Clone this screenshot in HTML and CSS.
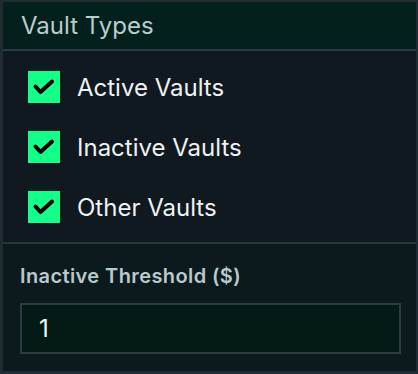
FILE: index.html
```html
<!DOCTYPE html>
<html lang="en">
<head>
    <meta charset="UTF-8">
    <meta name="viewport" content="width=device-width, initial-scale=1.0">
    <title>Vault Filters</title>
    <link rel="stylesheet" href="styles.css">
</head>
<body>
    <div class="panel">
        <div class="panel-header">Vault Types</div>

        <!-- Lista de tipos -->
        <div class="type-list">
            <label class="type-row">
                <span class="check">
                    <svg viewBox="0 0 32 32" width="32" height="32"><path d="M7.5 15.5 L12.5 21 L24 10.5" fill="none" stroke="#000" stroke-width="4" stroke-linecap="round" stroke-linejoin="round"/></svg>
                </span>
                <span class="type-name">Active Vaults</span>
            </label>
            <label class="type-row">
                <span class="check">
                    <svg viewBox="0 0 32 32" width="32" height="32"><path d="M7.5 15.5 L12.5 21 L24 10.5" fill="none" stroke="#000" stroke-width="4" stroke-linecap="round" stroke-linejoin="round"/></svg>
                </span>
                <span class="type-name">Inactive Vaults</span>
            </label>
            <label class="type-row">
                <span class="check">
                    <svg viewBox="0 0 32 32" width="32" height="32"><path d="M7.5 15.5 L12.5 21 L24 10.5" fill="none" stroke="#000" stroke-width="4" stroke-linecap="round" stroke-linejoin="round"/></svg>
                </span>
                <span class="type-name">Other Vaults</span>
            </label>
        </div>

        <div class="threshold">
            <div class="threshold-label">Inactive Threshold ($)</div>
            <div class="threshold-input">1</div>
        </div>
    </div>
</body>
</html>
```

FILE: styles.css
```css
body {
    margin: 0;
    padding: 0;
    background-color: #1f2d33;
    font-family: Inter, "Noto Sans", sans-serif;
}
.panel {
    width: 413px;
    height: 369px;
    margin: 2px 2px 0 3px;
    display: flex;
    flex-direction: column;
    background-color: #0c1a1e;
}
.panel-header {
    height: 47px;
    padding-left: 18px;
    display: flex;
    align-items: center;
    background-color: #03201c;
    color: #b9cdd0;
    font-size: 24px;
    border-bottom: 2px solid #2a3a40;
}
.type-list {
    padding: 20px 0 19px 25px;
    display: flex;
    flex-direction: column;
    gap: 28px;
    background-color: #111920;
    border-bottom: 2px solid #27363c;
}
.type-row {
    display: flex;
    align-items: center;
    height: 32px;
    gap: 17px;
}
.check {
    width: 32px;
    height: 32px;
    background-color: #14ff8a;
    display: flex;
}
.type-name {
    color: #eef2f3;
    font-size: 24px;
}
.threshold {
    flex: 1;
    padding: 20px 15px 0 17px;
}
.threshold-label {
    color: #b9c9cc;
    font-size: 20px;
    font-weight: 600;
    letter-spacing: 0.4px;
    margin-bottom: 15px;
}
.threshold-input {
    height: 47px;
    border: 2px solid #2a3d42;
    background-color: #031a17;
    color: #f4f6f6;
    font-size: 24px;
    padding-left: 17px;
    display: flex;
    align-items: center;
}
```
